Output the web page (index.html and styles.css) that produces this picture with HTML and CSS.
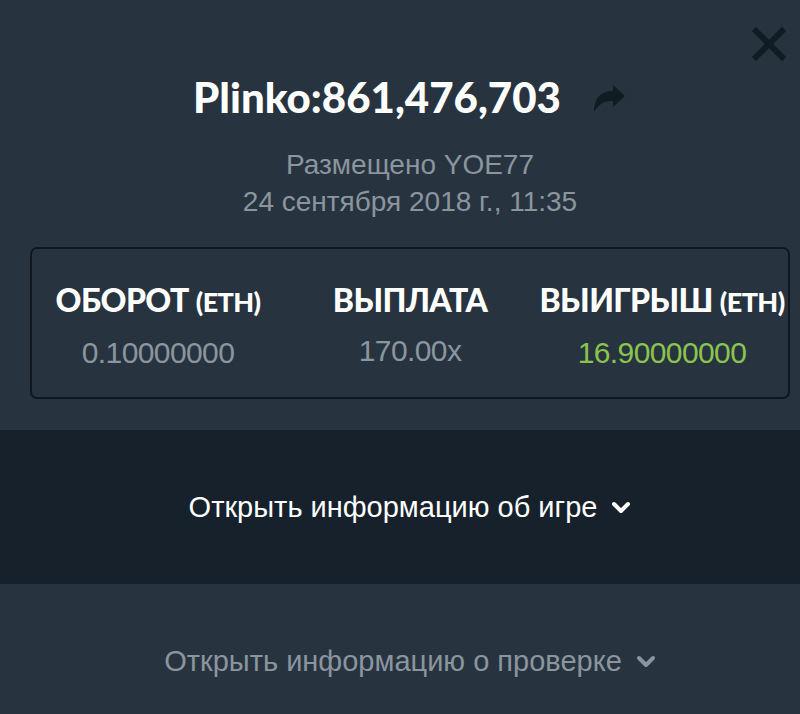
FILE: index.html
```html
<!DOCTYPE html>
<html lang="ru">

<head>
   <meta charset="UTF-8">
   <meta name="viewport" content="width=device-width, initial-scale=1.0">
   <title>Plinko bet</title>
   <link rel="stylesheet" href="styles.css">
</head>

<body>
   <div class="bet-modal">
       <button class="close-btn" aria-label="Закрыть">
           <svg width="34" height="34" viewBox="0 0 34 34">
               <path d="M4 4 L30 30 M30 4 L4 30" stroke="#111b24" stroke-width="6" stroke-linecap="square"/>
           </svg>
       </button>

       <div class="bet-head">
           <h1 class="bet-title">Plinko:861,476,703</h1>
           <svg class="share-icon" width="36" height="32" viewBox="0 0 36 32">
               <path d="M34 13 L22 2 V8 C12 8 3 13 3 29 C8 21 13 18 22 18 V24 Z" fill="#111b24"/>
           </svg>
       </div>

       <div class="bet-meta">
           <p>Размещено YOE77</p>
           <p>24 сентября 2018 г., 11:35</p>
       </div>

       <div class="stats">
           <div class="stat">
               <div class="stat-label">ОБОРОТ <span>(ЕТН)</span></div>
               <div class="stat-value">0.10000000</div>
           </div>
           <div class="stat">
               <div class="stat-label">ВЫПЛАТА</div>
               <div class="stat-value">170.00x</div>
           </div>
           <div class="stat">
               <div class="stat-label">ВЫИГРЫШ <span>(ЕТН)</span></div>
               <div class="stat-value win">16.90000000</div>
           </div>
       </div>

       <div class="toggle toggle-game">
           Открыть информацию об игре
           <svg class="chevron" width="20" height="14" viewBox="0 0 20 14">
               <path d="M3 3 L10 10 L17 3" fill="none" stroke="currentColor" stroke-width="4" stroke-linejoin="round" stroke-linecap="round"/>
           </svg>
       </div>

       <div class="toggle toggle-fair">
           Открыть информацию о проверке
           <svg class="chevron" width="20" height="14" viewBox="0 0 20 14">
               <path d="M3 3 L10 10 L17 3" fill="none" stroke="currentColor" stroke-width="4" stroke-linejoin="round" stroke-linecap="round"/>
           </svg>
       </div>
   </div>
</body>

</html>
```

FILE: styles.css
```css
body {
    margin: 0;
    background-color: #273440;
    font-family: "Liberation Sans", Arial, sans-serif;
}

.bet-modal {
    position: relative;
    width: 800px;
    height: 714px;
    overflow: hidden;
}

.close-btn {
    position: absolute;
    top: 27px;
    left: 752px;
    padding: 0;
    background: none;
    border: none;
    cursor: pointer;
}

.bet-head {
    display: flex;
    justify-content: center;
    align-items: center;
    gap: 30px;
    padding-top: 72px;
    padding-left: 20px;
}

.bet-title {
    margin: 0;
    font-family: Lato, sans-serif;
    font-weight: 900;
    font-size: 42px;
    line-height: 50px;
    color: #ffffff;
}

.share-icon {
    margin-top: 4px;
}

.bet-meta {
    margin-top: 24px;
    padding-left: 20px;
    text-align: center;
    color: #8b959e;
    font-size: 28px;
    line-height: 37px;
}

.bet-meta p {
    margin: 0;
}

.stats {
    display: grid;
    grid-template-columns: repeat(3, 1fr);
    margin: 27px 10px 0 30px;
    height: 152px;
    border: 2px solid #0f1820;
    border-radius: 7px;
    box-sizing: border-box;
    padding-top: 34px;
}

.stat {
    text-align: center;
}

.stat-label {
    font-family: Lato, sans-serif;
    font-weight: 900;
    font-size: 32px;
    line-height: 34px;
    color: #ffffff;
    letter-spacing: -0.6px;
}

.stat-label span {
    font-size: 27px;
}

.stat-value {
    margin-top: 17px;
    font-size: 30px;
    line-height: 34px;
    color: #8b959e;
    letter-spacing: -0.6px;
}

.stat-value.win {
    color: #8bc34f;
}

.toggle {
    display: flex;
    justify-content: center;
    align-items: center;
    gap: 14px;
    padding-left: 20px;
    font-size: 29px;
}

.toggle-game {
    margin-top: 31px;
    height: 154px;
    background-color: #17212c;
    color: #ffffff;
}

.toggle-fair {
    height: 154px;
    color: #8b959e;
}

.chevron {
    margin-top: 2px;
}
```
